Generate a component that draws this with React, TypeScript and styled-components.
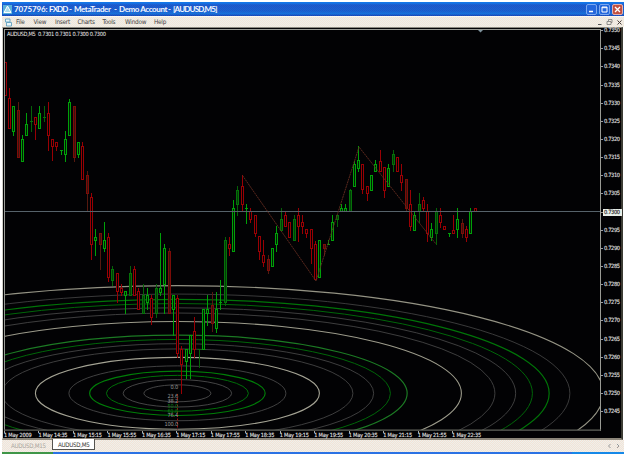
import React from "react";
import styled, { createGlobalStyle } from "styled-components";

const GlobalStyle = createGlobalStyle`
  html, body { margin: 0; padding: 0; background: #fff; overflow: hidden; }
  * { box-sizing: border-box; }
`;

const uiFont = `"DejaVu Sans Condensed", "DejaVu Sans", sans-serif`;

const Window = styled.div`
  width: 625px;
  height: 454px;
  padding: 2px 1px 0 2px;
  display: flex;
  flex-direction: column;
  background: #fff;
  font-family: ${uiFont};
  overflow: hidden;
`;

const TitleBar = styled.header`
  height: 14px;
  flex: none;
  display: flex;
  align-items: center;
  padding-left: 1px;
  background:
    repeating-conic-gradient(rgba(0, 130, 235, 0.35) 0 25%, transparent 0 50%) 0 0 / 2px 2px,
    linear-gradient(#1874e8 0 1px, #2350c4 3px, #2158c8 9px, #1b70d8 12px, #2044b4 13px);
`;

const Title = styled.h1`
  margin: 0 auto 0 2px;
  display: flex;
  font-family: Lato, sans-serif;
  font-weight: 700;
  font-size: 8px;
  line-height: 14px;
  white-space: pre;
  color: #f4f8ff;
`;

const TitlePart = styled.span<{ $width: number; $spacing?: number }>`
  width: ${(p) => p.$width}px;
  letter-spacing: ${(p) => p.$spacing ?? 0}px;
`;

const Controls = styled.div`
  display: flex;
  gap: 2px;
  padding-right: 1px;
`;

const ControlButton = styled.button<{ $danger?: boolean }>`
  width: 11px;
  height: 11px;
  padding: 0;
  display: grid;
  place-items: center;
  border: 1px solid ${(p) => (p.$danger ? "#e0b0b0" : "#7ba8f0")};
  border-radius: 2px;
  background: ${(p) => (p.$danger ? "#c25040" : "#2467dc")};
`;

const MenuBar = styled.nav`
  height: 11px;
  flex: none;
  display: flex;
  align-items: center;
  padding-left: 3px;
  background: repeating-conic-gradient(#f4e4d8 0 25%, #ecf0ea 0 50%) 0 0 / 2px 2px;
  border-top: 1px solid #fbf7f0;
`;

const MenuItem = styled.span<{ $width: number }>`
  width: ${(p) => p.$width}px;
  font-size: 6.4px;
  line-height: 10px;
  letter-spacing: -0.25px;
  color: #444;
`;

const MdiControls = styled.div`
  margin-left: auto;
  display: flex;
  gap: 3px;
  padding-right: 1px;
`;

const ChartFrame = styled.main`
  height: 413px;
  flex: none;
  margin-right: 1px;
  display: grid;
  grid-template-columns: 598px 1fr;
  grid-template-rows: 403px 1fr;
  background: #020204;
  border-top: 1px solid #8b8980;
  border-left: 1px solid #d0d0c8;
  border-right: 2px solid #3c3c34;
  border-bottom: 2px solid #8c867a;
`;

const PriceAxis = styled.aside`
  display: flex;
  flex-direction: column;
  margin-top: -6.4px;
`;

const PriceLabel = styled.span<{ $current?: boolean }>`
  height: 18.15px;
  flex: none;
  display: flex;
  align-items: center;
  font-size: 5.7px;
  line-height: 7px;
  letter-spacing: -0.36px;
  color: ${(p) => (p.$current ? "#111" : "#e2e2e2")};
  -webkit-text-stroke: 0.1px currentColor;
  &::before {
    content: "";
    width: 2px;
    height: 1px;
    background: #9c9c9c;
  }
  & > span {
    width: 19px;
    padding-left: 1px;
    background: ${(p) => (p.$current ? "#e9eee9" : "transparent")};
  }
`;

const TimeAxis = styled.footer`
  grid-column: 1 / -1;
  display: flex;
  padding-left: 1px;
`;

const TimeLabel = styled.span`
  width: 34.48px;
  flex: none;
  padding-top: 1px;
  font-size: 5.6px;
  line-height: 6px;
  letter-spacing: -0.22px;
  white-space: nowrap;
  color: #e4e4e4;
  -webkit-text-stroke: 0.1px currentColor;
  background: linear-gradient(#aaa, #aaa) 0 0 / 1px 2px no-repeat;
`;

const TabStrip = styled.div`
  height: 12px;
  flex: none;
  display: flex;
  align-items: stretch;
  background: repeating-conic-gradient(#f4e2d6 0 25%, #eef1ec 0 50%) 0 0 / 2px 2px;
`;

const Tab = styled.span<{ $active?: boolean }>`
  width: ${(p) => (p.$active ? 43 : 50)}px;
  height: 11px;
  margin-top: ${(p) => (p.$active ? -1 : 0)}px;
  padding-left: ${(p) => (p.$active ? 5 : 8)}px;
  font-size: 6.2px;
  line-height: 11px;
  letter-spacing: -0.3px;
  color: ${(p) => (p.$active ? "#333" : "#aaa59d")};
  background: ${(p) => (p.$active ? "#fff" : "transparent")};
  border: solid ${(p) => (p.$active ? "#55534e" : "transparent")};
  border-width: 0 1px 1px;
`;

const TabArrows = styled.div`
  margin-left: auto;
  display: flex;
  align-items: center;
  padding-right: 3px;
`;

const Taskbar = styled.div`
  height: 2px;
  flex: none;
  background: linear-gradient(90deg, #3f9648 0 51px, #2b72e4 51px 570px, #1689e8 570px);
`;

/** [direction, high, body top, body bottom, low]; lower case marks faint candles. */
type Candle = [string, number, number, number, number];

const candles: Candle[] = [
  ["R", 62, 62, 95, 95], ["R", 88, 98, 128, 128], ["G", 106, 106, 131, 135], ["r", 102, 110, 157, 157],
  ["G", 135, 139, 161, 161], ["G", 113, 124, 135, 135], ["g", 106, 121, 121, 131], ["R", 117, 117, 124, 139],
  ["G", 106, 113, 128, 128], ["g", 106, 117, 117, 121], ["R", 102, 113, 135, 150], ["R", 139, 139, 146, 160],
  ["R", 142, 142, 146, 150], ["G", 150, 150, 150, 154], ["G", 131, 139, 154, 161], ["G", 99, 102, 135, 135],
  ["r", 106, 106, 157, 161], ["G", 142, 142, 154, 157], ["R", 142, 146, 179, 179], ["r", 171, 175, 193, 211],
  ["R", 193, 197, 244, 259], ["G", 229, 237, 240, 255], ["r", 233, 233, 244, 269], ["G", 222, 240, 248, 251],
  ["R", 233, 237, 277, 281], ["g", 266, 269, 280, 285], ["R", 273, 273, 291, 302], ["R", 284, 288, 292, 295],
  ["G", 291, 291, 295, 313], ["g", 266, 273, 295, 295], ["R", 266, 269, 295, 295], ["R", 288, 291, 309, 309],
  ["g", 284, 295, 313, 313], ["G", 288, 295, 302, 309], ["R", 295, 298, 317, 324], ["g", 284, 288, 313, 317],
  ["G", 233, 288, 292, 295], ["G", 244, 248, 284, 313], ["r", 248, 251, 313, 313], ["G", 295, 295, 309, 335],
  ["R", 295, 298, 353, 357], ["R", 346, 349, 364, 393], ["G", 349, 349, 361, 378], ["G", 335, 335, 353, 378],
  ["R", 317, 331, 349, 357], ["g", 349, 349, 349, 367], ["G", 309, 309, 349, 349], ["G", 295, 309, 313, 325],
  ["r", 292, 305, 323, 331], ["G", 292, 309, 328, 332], ["G", 280, 302, 302, 309], ["g", 237, 240, 302, 305],
  ["R", 237, 244, 248, 255], ["G", 200, 208, 251, 251], ["g", 186, 190, 204, 215], ["R", 175, 186, 204, 211],
  ["G", 204, 208, 208, 223], ["R", 208, 211, 219, 222], ["R", 215, 215, 233, 236], ["R", 236, 236, 251, 259],
  ["R", 240, 255, 262, 266], ["r", 255, 259, 270, 273], ["G", 248, 248, 266, 266], ["G", 226, 233, 244, 251],
  ["g", 208, 219, 230, 230], ["R", 211, 215, 226, 226], ["R", 222, 222, 237, 237], ["g", 215, 219, 240, 240],
  ["R", 208, 215, 226, 241], ["R", 215, 222, 226, 233], ["R", 229, 229, 233, 237], ["R", 229, 229, 248, 263],
  ["R", 241, 244, 279, 279], ["G", 240, 240, 277, 277], ["r", 244, 244, 248, 255], ["G", 240, 244, 244, 244],
  ["G", 215, 222, 240, 240], ["g", 215, 215, 219, 226], ["G", 204, 208, 211, 211], ["G", 204, 208, 211, 211],
  ["g", 189, 190, 211, 211], ["G", 161, 164, 186, 186], ["G", 146, 160, 168, 171], ["R", 164, 164, 189, 193],
  ["R", 186, 186, 193, 200], ["G", 175, 175, 190, 190], ["G", 160, 164, 171, 171], ["R", 150, 161, 171, 171],
  ["R", 167, 167, 190, 197], ["G", 164, 168, 186, 186], ["g", 150, 154, 164, 171], ["R", 157, 157, 171, 171],
  ["R", 164, 175, 182, 190], ["r", 179, 179, 208, 211], ["R", 190, 204, 226, 230], ["G", 211, 215, 230, 230],
  ["g", 193, 204, 211, 222], ["R", 197, 200, 208, 211], ["R", 204, 211, 233, 241], ["G", 223, 229, 237, 240],
  ["g", 208, 211, 233, 244], ["R", 208, 215, 222, 227], ["R", 226, 226, 229, 229], ["G", 233, 233, 233, 236],
  ["R", 215, 230, 233, 233], ["G", 208, 219, 229, 237], ["r", 219, 223, 233, 237], ["R", 226, 229, 237, 241],
  ["G", 208, 211, 233, 233], ["R", 208, 208, 211, 211],
];

const candleColors: Record<string, { line: string; wick: string; fill: string }> = {
  R: { line: "#990004", wick: "#990004", fill: "#020204" },
  r: { line: "#7c0c08", wick: "#56190f", fill: "#3a140e" },
  G: { line: "#00a008", wick: "#00a008", fill: "#021c04" },
  g: { line: "#047208", wick: "#056208", fill: "#043c08" },
};

const rings: [number, string, number][] = [
  [0.236, "#565656", 0.8], [0.382, "#565656", 0.8], [0.5, "#006e08", 1], [0.618, "#007c08", 1.2],
  [0.764, "#505050", 0.8], [1, "#a4a394", 1.1],
  [1.236, "#4c4c4c", 0.8], [1.382, "#4c4c4c", 0.8], [1.5, "#006608", 1], [1.618, "#1c7a24", 1.2],
  [2, "#9c9b8b", 1.1],
  [2.236, "#4c4c4c", 0.8], [2.382, "#4c4c4c", 0.8], [2.5, "#006608", 1], [2.618, "#007408", 1.2],
  [2.764, "#484848", 0.8], [3, "#949384", 1.1],
];

const fibLabels: [string, number, string][] = [
  ["0.0", 389, "#999"], ["23.6", 398, "#999"], ["38.2", 403, "#999"], ["50.0", 408, "#0a7a12"],
  ["61.8", 412.5, "#0a7a12"], ["76.4", 417, "#999"], ["100.0", 426, "#999"],
];

const menus: [string, number][] = [
  ["File", 17.5], ["View", 21.5], ["Insert", 22.5], ["Charts", 25], ["Tools", 22.5], ["Window", 29], ["Help", 20],
];

const prices = Array.from({ length: 22 }, (_, i) => (0.735 - i * 0.0005).toFixed(4));
const times = ["2009", "14:35", "15:15", "15:55", "16:35", "17:15", "17:55", "18:35", "19:15", "19:55", "20:35", "21:15", "21:55", "22:35"];

const CandleMark = ({ candle, index }: { candle: Candle; index: number }) => {
  const [kind, high, top, bottom, low] = candle;
  const color = candleColors[kind];
  const x = Math.floor(5.25 + index * 4.31);
  return (
    <g shapeRendering="crispEdges">
      <rect x={x} y={high} width={1} height={low - high + 1} fill={color.wick} />
      {bottom > top ? (
        <rect x={x - 0.5} y={top + 0.5} width={2} height={bottom - top} fill={color.fill} stroke={color.line} strokeWidth={1} />
      ) : (
        <rect x={x - 1} y={top} width={3} height={1} fill={color.line} />
      )}
    </g>
  );
};

const PlotSvg = styled.svg`
  display: block;
  font-family: ${uiFont};
`;

const Plot = () => (
  <PlotSvg width={598} height={403} viewBox="3 28 598 403">
    <defs>
      <clipPath id="plot">
        <rect x={5} y={30} width={595} height={400} />
      </clipPath>
    </defs>
    <g clipPath="url(#plot)">
      {rings.map(([ratio, stroke, width]) => (
        <ellipse key={ratio} cx={177.4} cy={393.3} rx={142 * ratio} ry={35.9 * ratio} fill="none" stroke={stroke} strokeWidth={width} />
      ))}
      {candles.map((candle, i) => (
        <CandleMark key={i} candle={candle} index={i} />
      ))}
      <rect x={5} y={211} width={595} height={1} fill="#56626a" />
      <path d="M242.5 175.5 316 281 359 147 436 244" fill="none" stroke="#642c20" strokeWidth={0.9} strokeDasharray="2 0.6" />
      <path d="M177.5 394V430" stroke="#a00c0c" strokeDasharray="2 1.5" />
    </g>
    {fibLabels.map(([label, y, fill]) => (
      <text key={label} x={178} y={y} textAnchor="end" fontSize={5.6} letterSpacing={-0.2} fill={fill}>{label}</text>
    ))}
    <text x={7} y={36} fontSize={5.7} textLength={99} fill="#f0f0f0">AUDUSD,M5&#160; 0.7301 0.7301 0.7300 0.7300</text>
    <path d="M478 30h5l-2.5 2.5z" fill="#7f929c" />
    <path d="M4.5 430.5V29.5H600.5V430.5" fill="none" stroke="#999b95" shapeRendering="crispEdges" />
    <path d="M4 430.2H601" stroke="#62645c" strokeWidth={1.2} />
  </PlotSvg>
);

export default function App() {
  return (
    <>
      <GlobalStyle />
      <Window>
        <TitleBar>
          <svg width="9" height="9" viewBox="0 0 9 9">
            <rect width="9" height="9" fill="#58b0d8" />
            <path d="M4.5 1 8 7.5H1z" fill="#a8dcec" stroke="#fff" />
          </svg>
          <Title>
            <TitlePart $width={35} $spacing={-0.15}>7075796:</TitlePart>
            <TitlePart $width={20} $spacing={-0.9}>FXDD</TitlePart>
            <TitlePart $width={5}>-</TitlePart>
            <TitlePart $width={40} $spacing={-0.4}>MetaTrader</TitlePart>
            <TitlePart $width={5}>-</TitlePart>
            <TitlePart $width={49} $spacing={-0.4}>Demo Account</TitlePart>
            <TitlePart $width={5}>-</TitlePart>
            <TitlePart $width={46} $spacing={-0.8}>[AUDUSD,M5]</TitlePart>
          </Title>
          <Controls>
            <ControlButton aria-label="Minimize">
              <svg width="9" height="9" viewBox="0 0 9 9"><path d="M2 6.5h4" stroke="#fff" strokeWidth="1.5" /></svg>
            </ControlButton>
            <ControlButton aria-label="Maximize">
              <svg width="9" height="9" viewBox="0 0 9 9"><path d="M2 2h5v5H2zM2 2.7h5" fill="none" stroke="#fff" /></svg>
            </ControlButton>
            <ControlButton $danger aria-label="Close">
              <svg width="9" height="9" viewBox="0 0 9 9"><path d="m2 2 5 5m0-5L2 7" stroke="#fff" strokeWidth="1.3" /></svg>
            </ControlButton>
          </Controls>
        </TitleBar>
        <MenuBar>
          <svg width="11" height="9" viewBox="0 0 11 9">
            <path d="M.5 1H5v3H.5zM1.5 4.5h5V8h-5z" fill="#e8f6fa" stroke="#62a0c0" strokeWidth="0.9" />
          </svg>
          {menus.map(([label, width]) => (
            <MenuItem key={label} $width={width}>{label}</MenuItem>
          ))}
          <MdiControls>
            <svg width="7" height="8" viewBox="0 0 7 8"><path d="M2 6.5h3.5" stroke="#555" /></svg>
            <svg width="7" height="8" viewBox="0 0 7 8"><path d="M2.5 3V1.5H6V4.5H5M1 3.5h4v3H1z" fill="none" stroke="#777" strokeWidth="0.8" /></svg>
            <svg width="7" height="8" viewBox="0 0 7 8"><path d="m1.5 2.5 4 4m0-4-4 4" stroke="#444" /></svg>
          </MdiControls>
        </MenuBar>
        <ChartFrame>
          <Plot />
          <PriceAxis>
            {prices.map((price) => (
              <PriceLabel key={price} $current={price === "0.7300"}><span>{price}</span></PriceLabel>
            ))}
          </PriceAxis>
          <TimeAxis>
            {times.map((time) => (
              <TimeLabel key={time}>1 May {time}</TimeLabel>
            ))}
          </TimeAxis>
        </ChartFrame>
        <TabStrip>
          <Tab>AUDUSD,M15</Tab>
          <Tab $active>AUDUSD,M5</Tab>
          <TabArrows>
            <svg width="14" height="6" viewBox="0 0 14 6"><path d="M3.5 1 1.5 3l2 2M10 1l2 2-2 2" fill="none" stroke="#999" /></svg>
          </TabArrows>
        </TabStrip>
        <Taskbar />
      </Window>
    </>
  );
}
